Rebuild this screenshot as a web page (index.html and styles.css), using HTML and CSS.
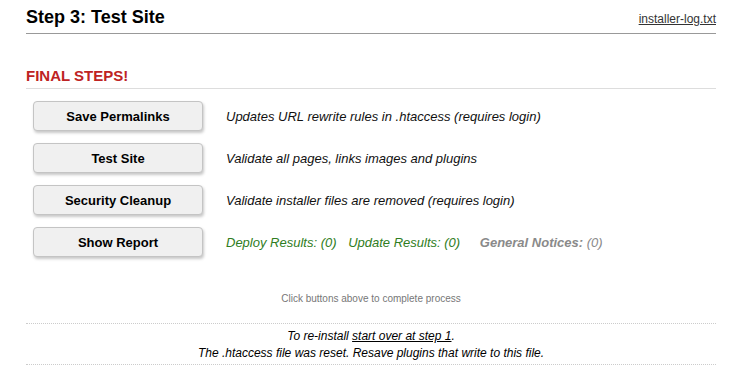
FILE: index.html
```html
<!DOCTYPE html>
<html lang="en">
<head>
  <meta charset="UTF-8" />
  <title>Step 3: Test Site</title>
  <link rel="stylesheet" href="styles.css">
</head>
<body>
  <div class="container">
    <div class="hdr">
      <h1>Step 3: Test Site</h1>
      <a href="#" class="log-link">installer-log.txt</a>
    </div>

    <h2 class="sub-hdr">FINAL STEPS!</h2>

    <div class="steps">
      <div class="step">
        <button class="step-btn">Save Permalinks</button>
        <span class="step-info">Updates URL rewrite rules in .htaccess (requires login)</span>
      </div>
      <div class="step">
        <button class="step-btn">Test Site</button>
        <span class="step-info">Validate all pages, links images and plugins</span>
      </div>
      <div class="step">
        <button class="step-btn">Security Cleanup</button>
        <span class="step-info">Validate installer files are removed (requires login)</span>
      </div>
      <div class="step">
        <button class="step-btn">Show Report</button>
        <span class="step-info">
          <span class="good">Deploy Results: (0)</span>
          <span class="good">Update Results: (0)</span>
          <span class="notice"><b>General Notices:</b> (0)</span>
        </span>
      </div>
    </div>

    <div class="hint">Click buttons above to complete process</div>

    <div class="footer-note">
      To re-install <a href="#">start over at step 1</a>.<br>
      The .htaccess file was reset. Resave plugins that write to this file.
    </div>
  </div>
</body>
</html>
```

FILE: styles.css
```css
body {
  margin: 0;
  background-color: #ffffff;
  color: #000000;
  font-family: "Liberation Sans", Arial, sans-serif;
}
.container {
  width: 690px;
  margin: 0 0 0 26px;
}
.hdr {
  display: flex;
  justify-content: space-between;
  align-items: baseline;
  margin-top: 6px;
  padding-bottom: 5px;
  border-bottom: 1px solid #999999;
}
.hdr h1 {
  margin: 0;
  font-size: 18px;
  line-height: 22px;
  font-weight: bold;
}
.log-link {
  color: #333333;
  font-size: 12px;
}
.sub-hdr {
  margin: 32px 0 0 0;
  padding-bottom: 2px;
  font-size: 15px;
  line-height: 20px;
  color: #be2323;
  border-bottom: 1px solid #dddddd;
}
.steps {
  margin-top: 12px;
  padding-left: 7px;
}
.step {
  display: flex;
  align-items: center;
  margin-bottom: 12px;
}
.step-btn {
  width: 170px;
  height: 30px;
  margin-right: 23px;
  background-color: #f0f0f0;
  border: 1px solid #c4c4c4;
  border-radius: 4px;
  box-shadow: 1px 2px 3px rgba(0, 0, 0, 0.22);
  font-family: "Liberation Sans", Arial, sans-serif;
  font-size: 13px;
  font-weight: bold;
  color: #000000;
  cursor: pointer;
}
.step-info {
  font-size: 13px;
  font-style: italic;
  color: #111111;
}
.good {
  color: #2f7d22;
  margin-right: 8px;
}
.notice {
  color: #8a8a8a;
  margin-left: 8px;
}
.hint {
  margin-top: 35px;
  text-align: center;
  font-size: 10px;
  line-height: 14px;
  color: #777777;
}
.footer-note {
  margin-top: 17px;
  padding: 4px 0 2px 0;
  border-top: 1px dotted #cccccc;
  border-bottom: 1px dotted #cccccc;
  text-align: center;
  font-size: 12px;
  line-height: 17px;
  font-style: italic;
}
.footer-note a {
  color: #000000;
}
```
